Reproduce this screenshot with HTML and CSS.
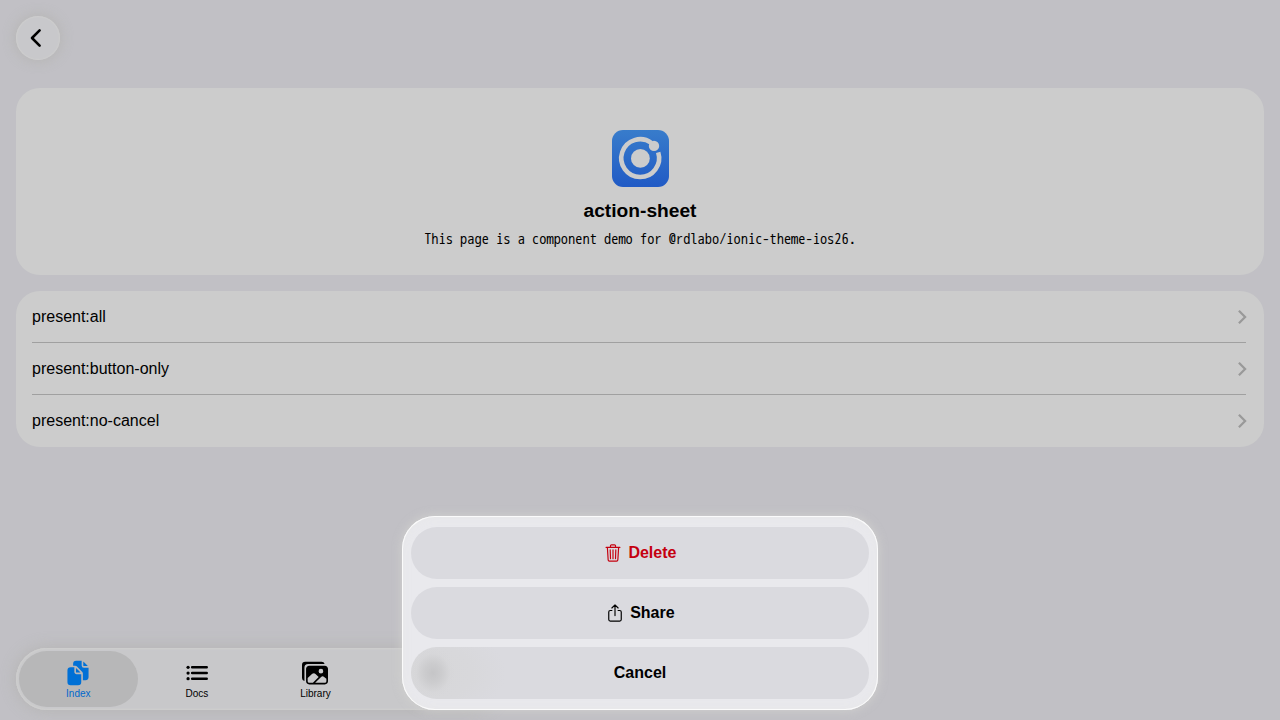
FILE: index.html
```html
<!DOCTYPE html>
<html lang="en">
<head>
<meta charset="utf-8">
<title>action-sheet</title>
<link rel="stylesheet" href="styles.css">
</head>
<body>
<div class="page">
  <header class="toolbar">
    <button class="back" aria-label="Back"><svg viewBox="0 0 24 24"><path d="M14.6 4.4 7 12l7.6 7.6"/></svg></button>
  </header>
  <main class="content">
    <section class="card hero">
      <svg class="logo" viewBox="0 0 57 57">
        <defs><linearGradient id="blue" x1="0" y1="0" x2="0" y2="1"><stop offset="0" stop-color="#387ccb"/><stop offset="1" stop-color="#205ac5"/></linearGradient></defs>
        <rect width="57" height="57" rx="11" fill="url(#blue)"/>
        <circle cx="28.4" cy="28.4" r="9.4" fill="#ccc"/>
        <path d="M39.5 13A18.9 18.9 0 1 0 46.2 22.4" fill="none" stroke="#ccc" stroke-width="4.6"/>
        <circle cx="42" cy="15.9" r="5.2" fill="#ccc"/>
      </svg>
      <h1 class="title">action-sheet</h1>
      <p class="desc">This page is a component demo for @rdlabo/ionic-theme-ios26.</p>
    </section>
    <ul class="card list">
      <li class="item"><div class="item-inner"><span>present:all</span><svg class="chevron" viewBox="0 0 512 512"><path d="M184 112l144 144-144 144"/></svg></div></li>
      <li class="item"><div class="item-inner"><span>present:button-only</span><svg class="chevron" viewBox="0 0 512 512"><path d="M184 112l144 144-144 144"/></svg></div></li>
      <li class="item"><div class="item-inner"><span>present:no-cancel</span><svg class="chevron" viewBox="0 0 512 512"><path d="M184 112l144 144-144 144"/></svg></div></li>
    </ul>
  </main>
  <nav class="tabs">
    <a class="tab selected">
      <svg class="tab-icon" viewBox="0 0 512 512"><path d="M298.39 248a4 4 0 002.86-6.8l-78.4-79.72a4 4 0 00-6.85 2.81V236a12 12 0 0012 12z"/><path d="M197 267a43.67 43.67 0 01-13-31v-92h-72a64.19 64.19 0 00-64 64v224a64 64 0 0064 64h144a64 64 0 0064-64V280h-92a43.61 43.61 0 01-31-13zM372 120h70.39a4 4 0 002.86-6.8l-78.4-79.72a4 4 0 00-6.85 2.81V108a12 12 0 0012 12z"/><path d="M372 152a44.34 44.34 0 01-44-44V16H220a60.07 60.07 0 00-60 60v36h42.12A40.81 40.81 0 01231 124.14l109.16 111a41.11 41.11 0 0111.83 29V400h53.05c32.51 0 58.95-26.92 58.95-60V152z"/></svg>
      <span>Index</span>
    </a>
    <a class="tab">
      <svg class="tab-icon list-icon" viewBox="0 0 512 512"><path class="bars" d="M160 144h288M160 256h288M160 368h288"/><circle cx="80" cy="144" r="32"/><circle cx="80" cy="256" r="32"/><circle cx="80" cy="368" r="32"/></svg>
      <span>Docs</span>
    </a>
    <a class="tab">
      <svg class="tab-icon" viewBox="0 0 512 512"><path d="M450.29 112H142c-34 0-62 27.51-62 61.33v245.34c0 33.82 28 61.33 62 61.33h308c34 0 62-26.18 62-60V173.33c0-33.82-27.68-61.33-61.71-61.33zm-77.15 61.34a46 46 0 11-46.28 46 46.19 46.19 0 0146.28-46.01zm-231.55 276c-17 0-29.86-13.75-29.86-30.66v-64.83l90.46-80.79a46.54 46.54 0 0163.44 1.83L328.27 337l-113 112.33zM480 418.67a30.67 30.67 0 01-30.71 30.66H259L376.08 333a46.24 46.24 0 0159.44-.16L480 370.59z"/><path d="M384 32H64A64 64 0 000 96v256a64.11 64.11 0 0048 62V152a72 72 0 0172-72h326a64.11 64.11 0 00-62-48z"/></svg>
      <span>Library</span>
    </a>
  </nav>
</div>
<div class="sheet" role="dialog">
  <button class="action destructive"><svg class="action-icon" viewBox="0 0 512 512"><path d="M112 112l20 320c.95 18.49 14.4 32 32 32h184c17.67 0 30.87-13.51 32-32l20-320M80 112h352M192 112V72a23.93 23.93 0 0124-24h80a23.93 23.93 0 0124 24v40M256 176v224M184 176l8 224M328 176l-8 224"/></svg>Delete</button>
  <button class="action"><svg class="action-icon" viewBox="0 0 512 512"><path d="M336 192h40a40 40 0 0140 40v192a40 40 0 01-40 40H136a40 40 0 01-40-40V232a40 40 0 0140-40h40M336 128l-80-80-80 80M256 321V48"/></svg>Share</button>
  <button class="action cancel">Cancel</button>
</div>
</body>
</html>
```

FILE: styles.css
```css
* { box-sizing: border-box; }
body {
  margin: 0;
  height: 720px;
  overflow: hidden;
  background: #c1c0c5;
  color: #000;
  font-family: "Liberation Sans", Arial, sans-serif;
}
button { border: 0; padding: 0; font: inherit; color: inherit; }
.page {
  height: 720px;
  padding: 16px 16px 10px;
  display: flex;
  flex-direction: column;
}
.toolbar { height: 72px; flex: none; }
.back {
  display: flex;
  align-items: center;
  justify-content: center;
  width: 44px;
  height: 44px;
  border-radius: 50%;
  background: #c8c8cb;
  box-shadow: inset 0 0 1px 1px #cdcdcd, 0 0 12px 2px rgba(170, 170, 165, .45);
}
.back svg {
  width: 24px;
  height: 24px;
  margin: .6px 3px 0 0;
  fill: none;
  stroke: #000;
  stroke-width: 2.6;
  stroke-linecap: round;
  stroke-linejoin: round;
}
.content { flex: 1; display: flex; flex-direction: column; gap: 16px; }
.card { margin: 0; padding: 0; background: #ccc; border-radius: 24px; }
.hero {
  height: 187px;
  padding-top: 42px;
  display: flex;
  flex-direction: column;
  align-items: center;
}
.logo { display: block; width: 57px; height: 57px; margin-left: 1px; }
.title { margin: 13px 0 0; font-size: 19.2px; line-height: 22px; }
.desc {
  margin: 6px 0 0;
  font: 14.4px/22px "WenQuanYi Zen Hei Mono", "Noto Sans Mono CJK JP", "Noto Sans CJK JP", monospace;
}
.list { list-style: none; overflow: hidden; }
.item { padding-left: 16px; padding-right: 18px; }
.item-inner {
  height: 52px;
  display: flex;
  align-items: center;
  justify-content: space-between;
  border-bottom: 1px solid #a0a0a0;
  font-size: 16px;
}
.item:last-child .item-inner { border-bottom-color: transparent; }
.chevron {
  width: 22px;
  height: 22px;
  margin-right: -7px;
  fill: none;
  stroke: #999;
  stroke-width: 52;
}
.tabs {
  width: 484px;
  height: 62px;
  flex: none;
  padding: 3px;
  display: flex;
  border-radius: 31px;
  background: #c8c8ca;
  box-shadow: inset 0 0 0 1px #cdcdcd, inset 0 0 2px 2px #cbcbcc, 0 0 14px 2px rgba(170, 170, 165, .45);
}
.tab {
  width: 118.6px;
  height: 56px;
  border-radius: 28px;
  display: flex;
  flex-direction: column;
  align-items: center;
  padding-top: 9px;
  font-size: 10px;
  line-height: 12px;
}
.tab-icon { display: block; width: 26px; height: 26px; margin: 0 1.6px 2px 0; }
.list-icon { margin-right: 0; }
.tab.selected { background: #b7b7b8; color: #0068cc; }
.tab.selected .tab-icon { fill: #0070d6; }
.bars { stroke: #000; stroke-width: 48; stroke-linecap: round; }
.sheet {
  position: absolute;
  left: 402px;
  top: 516px;
  width: 476px;
  height: 194px;
  padding: 11px 9px;
  display: flex;
  flex-direction: column;
  gap: 8px;
  border-radius: 33px;
  background: #e9e9ed;
  box-shadow: inset 0 0 0 1px #fbfbfb, inset 0 0 12px #e7e7e8, 0 0 10px 1px rgba(210, 210, 207, .8);
}
.action {
  height: 52px;
  flex: none;
  display: flex;
  align-items: center;
  justify-content: center;
  gap: 4.8px;
  border-radius: 26px;
  background: #dadadf;
  font-size: 16px;
  font-weight: 700;
}
.destructive { color: #c5000f; }
.cancel {
  background:
    radial-gradient(ellipse 22px 25px at 22px 26px, #c5c5c7 0, rgba(200, 200, 202, .75) 38%, rgba(212, 212, 214, .25) 78%, rgba(218, 218, 220, 0) 100%),
    radial-gradient(ellipse 85px 50px at 10px 26px, #d7d7d9 0, #d8d8db 60%, rgba(218, 218, 223, 0) 100%),
    #dadadf;
}
.action-icon {
  width: 20px;
  height: 20px;
  margin: -1px .5px 0 -.5px;
  fill: none;
  stroke: currentColor;
  stroke-width: 30;
  stroke-linecap: round;
  stroke-linejoin: round;
}
```
